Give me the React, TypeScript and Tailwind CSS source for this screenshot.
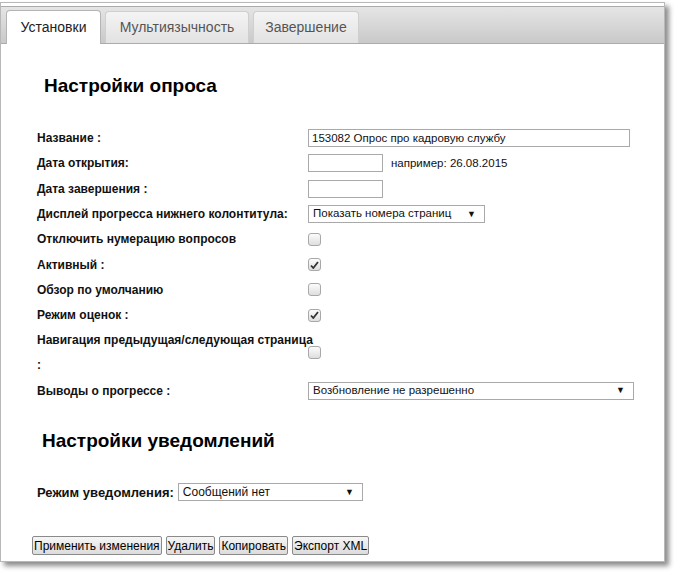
import React from 'react';

const ui = "[font-family:'Liberation_Sans',Arial,sans-serif]";
const labelCls = `whitespace-nowrap font-bold text-[12px] text-[#111] ${ui}`;

function Checkbox({ checked }: { checked?: boolean }) {
  return (
    <span className="flex h-[13px] w-[13px] items-center justify-center rounded-[3px] border border-[#a8a8a8] bg-gradient-to-b from-[#fcfcfc] to-[#dedede]">
      {checked && (
        <svg width="9" height="8" viewBox="0 0 9 8">
          <path d="M1 4.5 L3.3 7 L8 1" fill="none" stroke="#333" strokeWidth="1.8" />
        </svg>
      )}
    </span>
  );
}

function Select({ value, className }: { value: string; className: string }) {
  return (
    <div className={`flex h-[18px] items-center justify-between border border-[#a9a9a9] bg-white pl-[4px] pr-[8px] text-[11.5px] text-[#111] ${ui} ${className}`}>
      <span>{value}</span>
      <span className="text-[9px] leading-none">▼</span>
    </div>
  );
}

function Row({ label, children, tall }: { label: React.ReactNode; children?: React.ReactNode; tall?: boolean }) {
  return (
    <div className={`flex items-center ${tall ? 'h-[50px]' : 'h-[25.3px]'}`}>
      <div className={`w-[271px] shrink-0 ${labelCls} ${tall ? 'leading-[25px]' : ''}`}>{label}</div>
      <div className="flex items-center">{children}</div>
    </div>
  );
}

export default function App() {
  return (
    <div className="h-[575px] w-[674px] bg-white">
      <div className="mt-[2px] h-[560px] w-[665px] border border-[#b8b8b8] bg-white pt-[3px] shadow-[4px_4px_5px_rgba(0,0,0,0.45)]">
        <div className="flex h-[38px] items-end gap-[4px] border-y border-[#ababab] bg-gradient-to-b from-[#e5e5e5] to-[#c9c9c9] pl-[5px]">
          <div className={`mb-[-1px] flex h-[34px] w-[95px] items-center justify-center rounded-t-[4px] border border-b-0 border-[#b4b4b4] bg-white text-[14px] text-[#222] ${ui}`}>
            Установки
          </div>
          <div className={`flex h-[32px] w-[144px] items-center justify-center rounded-t-[4px] border border-b-0 border-[#cfcfcf] bg-gradient-to-b from-[#f4f4f4] to-[#e2e2e2] text-[14px] text-[#555] ${ui}`}>
            Мультиязычность
          </div>
          <div className={`flex h-[32px] w-[106px] items-center justify-center rounded-t-[4px] border border-b-0 border-[#cfcfcf] bg-gradient-to-b from-[#f4f4f4] to-[#e2e2e2] text-[14px] text-[#555] ${ui}`}>
            Завершение
          </div>
        </div>

        <div className="pl-[36px]">
          <h1 className={`mt-[28px] ml-[7px] text-[19px] font-bold text-black ${ui}`}>Настройки опроса</h1>

          <div className="mt-[25px] flex flex-col">
            <Row label="Название :">
              <div className={`flex h-[18px] w-[322px] items-center border border-[#a9a9a9] px-[3px] text-[11.5px] text-[#111] ${ui}`}>
                153082 Опрос про кадровую службу
              </div>
            </Row>
            <Row label="Дата открытия:">
              <div className="h-[18px] w-[75px] border border-[#a9a9a9]" />
              <span className={`ml-[8px] text-[11.5px] text-[#111] ${ui}`}>например: 26.08.2015</span>
            </Row>
            <Row label="Дата завершения :">
              <div className="h-[18px] w-[75px] border border-[#a9a9a9]" />
            </Row>
            <Row label="Дисплей прогресса нижнего колонтитула:">
              <Select value="Показать номера страниц" className="w-[177px]" />
            </Row>
            <Row label="Отключить нумерацию вопросов">
              <Checkbox />
            </Row>
            <Row label="Активный :">
              <Checkbox checked />
            </Row>
            <Row label="Обзор по умолчанию">
              <Checkbox />
            </Row>
            <Row label="Режим оценок :">
              <Checkbox checked />
            </Row>
            <Row tall label={<>Навигация предыдущая/следующая страница<br />:</>}>
              <Checkbox />
            </Row>
            <Row label="Выводы о прогрессе :">
              <Select value="Возбновление не разрешенно" className="w-[326px]" />
            </Row>
          </div>

          <h2 className={`mt-[24px] ml-[5px] text-[19px] font-bold text-black ${ui}`}>Настройки уведомлений</h2>

          <div className="mt-[27px] flex items-center">
            <span className={`${labelCls} text-[13px]`}>Режим уведомления:</span>
            <Select value="Сообщений нет" className="ml-[4px] w-[185px] text-[12px]" />
          </div>

          <div className="mt-[34px] ml-[-5px] flex gap-[4px]">
            {['Применить изменения', 'Удалить', 'Копировать', 'Экспорт XML'].map((b) => (
              <button
                key={b}
                className={`h-[19px] rounded-[2px] border border-[#8a8a8a] bg-gradient-to-b from-[#f6f6f6] to-[#dcdcdc] px-[1px] text-[12px] leading-none text-black ${ui}`}
              >
                {b}
              </button>
            ))}
          </div>
        </div>
      </div>
    </div>
  );
}
